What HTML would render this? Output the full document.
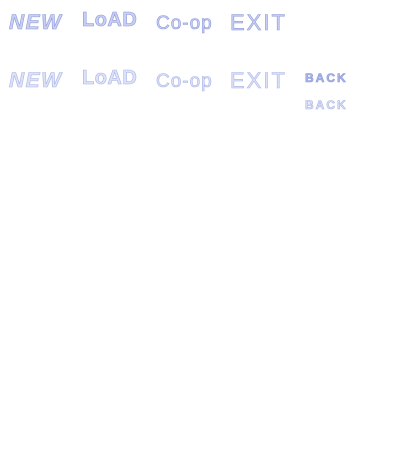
<!DOCTYPE html>
<html><head><style>
html,body{margin:0;padding:0;background:#fff;width:400px;height:468px;overflow:hidden;position:relative}
.t{position:absolute;font-family:"Liberation Sans",sans-serif;font-weight:bold;white-space:nowrap;-webkit-text-stroke:0.6px #8e9ad8}
.a{color:#c8cff4}
.b{color:#dde2f8;-webkit-text-stroke:0.6px #aab4e6}
.s{font-size:12px;letter-spacing:2px}
</style></head><body>
<div class="t a" style="left:9px;top:11px;font-size:21px;font-style:italic;letter-spacing:1.5px">NEW</div>
<div class="t a" style="left:82px;top:9px;font-size:20px;letter-spacing:0.5px">LoAD</div>
<div class="t a" style="left:156px;top:13px;font-size:19px;font-weight:normal;letter-spacing:1px">Co-op</div>
<div class="t a" style="left:230px;top:10px;font-size:22px;font-weight:normal;letter-spacing:2px">EXIT</div>
<div class="t b" style="left:9px;top:69px;font-size:21px;font-style:italic;letter-spacing:1.5px">NEW</div>
<div class="t b" style="left:82px;top:67px;font-size:20px;letter-spacing:0.5px">LoAD</div>
<div class="t b" style="left:156px;top:71px;font-size:19px;font-weight:normal;letter-spacing:1px">Co-op</div>
<div class="t b" style="left:230px;top:68px;font-size:22px;font-weight:normal;letter-spacing:2px">EXIT</div>
<div class="t a s" style="left:305px;top:71px;color:#aab4e8">BACK</div>
<div class="t b s" style="left:305px;top:98px">BACK</div>
</body></html>
